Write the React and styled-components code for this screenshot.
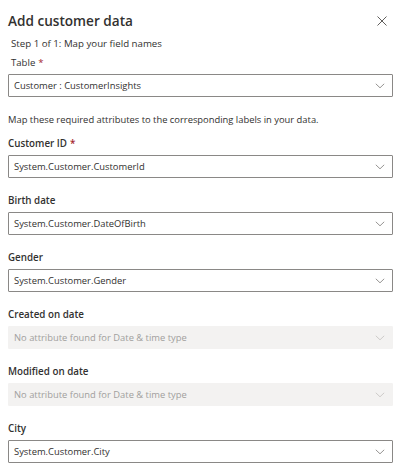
import React from 'react';
import styled, { createGlobalStyle } from 'styled-components';

const GlobalStyle = createGlobalStyle`
	html, body {
		margin: 0;
		padding: 0;
		background: #ffffff;
	}
	body {
		font-family: "Open Sans", "Noto Sans", Arial, sans-serif;
		color: #323130;
	}
`;

const Panel = styled.div`
	width: 400px;
	height: 472px;
	box-sizing: border-box;
	padding: 0 7px 0 8px;
	background: #ffffff;
	overflow: hidden;
`;

const Header = styled.div`
	display: flex;
	align-items: center;
	justify-content: space-between;
	height: 30px;
	padding-top: 6px;
`;

const Title = styled.h1`
	margin: 0;
	font-size: 13.6px;
	line-height: 20px;
	font-weight: 600;
	color: #323130;
`;

const CloseButton = styled.button`
	display: flex;
	align-items: center;
	justify-content: center;
	width: 20px;
	height: 20px;
	margin-right: 1px;
	padding: 0;
	border: none;
	background: transparent;
	cursor: pointer;
`;

const Step = styled.div`
	margin: 1px 0 5px 3px;
	font-size: 9.7px;
	line-height: 14px;
	color: #323130;
`;

const Description = styled.p`
	margin: 16px 0 10px;
	font-size: 9.4px;
	line-height: 14px;
	color: #323130;
`;

const Field = styled.div`
	display: flex;
	flex-direction: column;
	gap: 4px;
	margin-bottom: 16px;
`;

const Label = styled.label`
	margin-left: ${p => (p.$inset ? '3px' : '0')};
	font-size: ${p => (p.$light ? '9.6px' : '9.8px')};
	line-height: 14px;
	font-weight: ${p => (p.$light ? 400 : 600)};
	color: #323130;
`;

const Required = styled.span`
	color: #a4262c;
	margin-left: 3px;
`;

const Select = styled.div`
	display: flex;
	align-items: center;
	justify-content: space-between;
	height: 23px;
	box-sizing: border-box;
	padding: 0 7px 0 5px;
	border: 1px solid ${p => (p.$disabled ? '#f3f2f1' : '#8a8886')};
	border-radius: 1px;
	background: ${p => (p.$disabled ? '#f3f2f1' : '#ffffff')};
	color: ${p => (p.$disabled ? '#a19f9d' : '#323130')};
	font-size: 9.4px;
	cursor: ${p => (p.$disabled ? 'default' : 'pointer')};
`;

const Value = styled.span`
	white-space: nowrap;
`;

const Chevron = ({ disabled }) => (
	<svg width="10" height="6" viewBox="0 0 10 6" fill="none">
		<path d="M0.8 0.8 L5 4.8 L9.2 0.8" stroke={disabled ? '#c8c6c4' : '#8a8886'} strokeWidth="0.9" />
	</svg>
);

const CloseIcon = () => (
	<svg width="10" height="10" viewBox="0 0 10 10" fill="none">
		<path d="M0.5 0.5 L9.5 9.5 M9.5 0.5 L0.5 9.5" stroke="#605e5c" strokeWidth="1" />
	</svg>
);

const Dropdown = ({ value, disabled }) => (
	<Select $disabled={disabled}>
		<Value>{value}</Value>
		<Chevron disabled={disabled} />
	</Select>
);

const fields = [
	{ label: 'Customer ID', required: true, value: 'System.Customer.CustomerId' },
	{ label: 'Birth date', value: 'System.Customer.DateOfBirth' },
	{ label: 'Gender', value: 'System.Customer.Gender' },
	{ label: 'Created on date', value: 'No attribute found for Date & time type', disabled: true },
	{ label: 'Modified on date', value: 'No attribute found for Date & time type', disabled: true },
	{ label: 'City', value: 'System.Customer.City' },
];

export default function App() {
	return (
		<>
			<GlobalStyle />
			<Panel>
				<Header>
					<Title>Add customer data</Title>
					<CloseButton aria-label="Close">
						<CloseIcon />
					</CloseButton>
				</Header>
				<Step>Step 1 of 1: Map your field names</Step>
				<Field>
					<Label $inset $light>
						Table<Required>*</Required>
					</Label>
					<Dropdown value="Customer : CustomerInsights" />
				</Field>
				<Description>Map these required attributes to the corresponding labels in your data.</Description>
				{fields.map(f => (
					<Field key={f.label}>
						<Label>
							{f.label}
							{f.required && <Required>*</Required>}
						</Label>
						<Dropdown value={f.value} disabled={f.disabled} />
					</Field>
				))}
			</Panel>
		</>
	);
}
